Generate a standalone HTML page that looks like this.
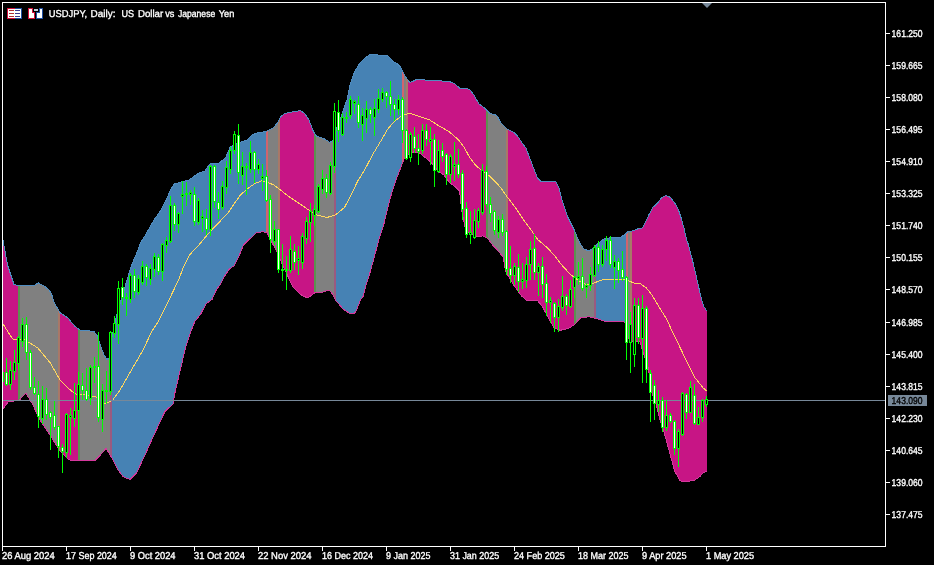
<!DOCTYPE html><html><head><meta charset="utf-8"><title>USDJPY, Daily</title>
<style>
html,body{margin:0;padding:0;background:#000;}
body{width:934px;height:565px;overflow:hidden;position:relative;font-family:"Liberation Sans",sans-serif;}
svg{position:absolute;left:0;top:0;display:block}
text{font-family:"Liberation Sans",sans-serif;font-size:10px;fill:#fff;text-rendering:geometricPrecision;stroke:#fff;stroke-width:0.35px;}
</style></head><body>
<svg width="934" height="565" viewBox="0 0 934 565">
<rect width="934" height="565" fill="#000"/>
<defs><clipPath id="band"><polygon points="3.0,240.0 7.5,265.0 14.0,284.5 19.0,285.6 34.0,285.5 36.5,284.0 38.5,283.0 41.0,284.5 45.0,286.6 48.5,289.5 51.4,293.5 54.0,302.0 56.4,306.4 60.0,312.7 67.7,317.7 75.0,326.5 80.0,330.0 90.0,331.0 94.0,331.5 97.0,335.5 100.6,346.0 104.0,355.0 106.8,359.4 109.0,358.0 112.0,337.0 116.5,316.0 120.0,303.6 123.0,294.5 126.5,281.6 130.0,270.0 133.7,260.0 138.0,250.0 140.0,243.9 147.0,232.4 154.3,219.5 161.5,209.4 166.5,199.4 170.8,189.3 174.4,183.9 183.0,181.5 188.8,180.0 195.7,175.3 200.0,172.4 204.3,171.7 210.0,163.8 218.7,163.4 225.9,157.3 230.0,147.3 238.0,143.0 247.4,140.0 251.7,135.0 257.4,133.0 266.0,131.5 273.0,128.0 277.5,123.0 280.4,117.0 284.7,113.6 293.3,111.7 300.5,110.7 304.8,113.6 309.0,120.0 313.4,131.5 316.0,135.8 324.0,138.7 330.0,142.4 333.0,140.0 336.0,130.0 340.0,120.0 344.0,108.0 347.3,99.0 349.7,86.4 352.6,76.8 355.5,70.0 359.9,63.3 364.7,58.5 370.0,54.2 377.2,54.2 378.2,55.1 387.3,55.1 393.1,61.4 397.4,63.8 401.3,68.1 404.7,75.8 410.0,82.6 416.7,79.5 420.0,79.2 427.6,80.5 442.0,81.0 450.0,81.8 455.0,84.0 460.6,88.9 466.1,88.2 470.3,90.3 474.5,95.9 478.7,103.6 485.0,108.4 489.8,113.3 496.8,115.4 501.0,123.0 506.5,128.6 513.5,132.1 517.7,136.3 523.2,144.6 526.1,148.4 530.3,159.5 534.5,170.6 537.3,177.6 540.8,181.1 555.4,181.1 558.9,187.4 562.4,201.3 567.9,217.3 574.0,229.5 575.7,233.6 580.0,243.6 584.3,249.4 589.4,250.8 593.0,248.0 598.7,243.0 604.4,238.6 611.6,237.6 618.8,238.0 624.5,235.0 627.4,232.0 634.8,230.3 638.7,228.4 642.5,227.9 645.4,222.6 649.3,213.9 653.1,207.2 657.9,202.8 661.8,197.5 666.1,195.4 670.5,197.5 674.3,202.3 678.2,209.1 681.1,217.8 684.0,228.4 686.4,239.0 687.8,242.7 692.5,260.3 697.3,281.0 701.3,298.5 703.7,306.4 707.0,311.2 707.0,471.5 703.0,472.7 700.4,476.0 695.0,480.0 685.0,482.0 680.0,480.7 677.4,476.0 674.6,471.0 670.3,455.0 664.5,433.7 659.5,418.0 656.0,404.0 651.6,392.0 648.5,369.0 644.0,355.0 640.0,342.0 632.0,341.0 627.0,338.0 625.0,323.0 623.4,321.7 606.2,321.7 597.6,318.9 589.0,316.7 580.3,318.0 574.6,324.6 568.9,328.2 560.3,330.3 554.5,328.2 548.8,318.9 543.0,307.4 537.3,300.2 527.3,301.0 521.5,295.9 514.3,285.9 505.7,271.5 503.0,256.7 497.4,250.0 491.6,243.8 487.3,238.0 483.0,235.9 475.9,236.6 465.8,231.0 461.5,209.0 459.6,191.0 455.0,186.7 449.5,182.4 443.8,175.0 438.0,171.0 430.9,162.3 425.0,157.3 419.4,153.0 413.6,152.0 404.8,157.0 402.0,164.4 396.0,180.0 390.4,197.4 384.0,223.6 379.0,239.4 374.8,255.0 370.5,271.0 366.0,285.0 363.3,296.0 360.5,300.0 355.4,312.8 350.4,314.0 343.0,309.0 335.4,300.0 333.0,294.6 329.0,290.0 321.7,292.5 314.5,293.0 307.8,298.0 303.0,296.0 298.8,293.0 293.0,286.7 288.7,278.0 283.0,266.0 277.3,252.0 271.5,242.0 267.0,232.4 262.0,231.7 256.2,233.0 249.0,239.6 243.3,245.3 239.0,256.0 234.0,265.8 229.0,269.4 224.8,275.8 220.5,284.4 216.2,290.0 212.0,299.5 206.0,303.8 200.4,314.6 194.7,321.7 191.0,331.0 185.5,348.0 180.0,371.0 175.0,392.6 173.0,404.0 165.0,411.4 155.0,432.7 145.0,455.0 136.6,472.8 130.0,479.6 123.0,476.5 118.0,470.0 112.0,458.0 106.0,448.4 100.4,455.0 94.7,461.0 80.0,460.3 71.7,461.0 68.9,459.6 60.0,451.0 50.0,435.0 38.7,418.0 33.0,405.0 25.8,393.0 19.0,400.5 8.6,401.5 3.0,409.0"/></clipPath></defs>
<g clip-path="url(#band)" shape-rendering="crispEdges">
<rect x="3" y="40" width="15" height="460" fill="#C71585"/>
<rect x="20" y="40" width="38" height="460" fill="#808080"/>
<rect x="60" y="40" width="18" height="460" fill="#C71585"/>
<rect x="80" y="40" width="30" height="460" fill="#808080"/>
<rect x="112" y="40" width="154" height="460" fill="#4682B4"/>
<rect x="268" y="40" width="10" height="460" fill="#808080"/>
<rect x="280" y="40" width="34" height="460" fill="#C71585"/>
<rect x="316" y="40" width="18" height="460" fill="#808080"/>
<rect x="336" y="40" width="66" height="460" fill="#4682B4"/>
<rect x="404" y="40" width="2" height="460" fill="#808080"/>
<rect x="408" y="40" width="78" height="460" fill="#C71585"/>
<rect x="488" y="40" width="18" height="460" fill="#808080"/>
<rect x="508" y="40" width="66" height="460" fill="#C71585"/>
<rect x="576" y="40" width="18" height="460" fill="#808080"/>
<rect x="596" y="40" width="30" height="460" fill="#4682B4"/>
<rect x="628" y="40" width="2" height="460" fill="#808080"/>
<rect x="632" y="40" width="75" height="460" fill="#C71585"/>
<rect x="18" y="40" width="2" height="460" fill="#5A9150"/>
<rect x="58" y="40" width="2" height="460" fill="#A87868"/>
<rect x="78" y="40" width="2" height="460" fill="#5A9150"/>
<rect x="110" y="40" width="2" height="460" fill="#9A5A80"/>
<rect x="266" y="40" width="2" height="460" fill="#D0646E"/>
<rect x="278" y="40" width="2" height="460" fill="#A87868"/>
<rect x="314" y="40" width="2" height="460" fill="#5A9150"/>
<rect x="334" y="40" width="2" height="460" fill="#9A5A80"/>
<rect x="402" y="40" width="2" height="460" fill="#D0646E"/>
<rect x="406" y="40" width="2" height="460" fill="#A87868"/>
<rect x="486" y="40" width="2" height="460" fill="#5A9150"/>
<rect x="506" y="40" width="2" height="460" fill="#A87868"/>
<rect x="574" y="40" width="2" height="460" fill="#5A9150"/>
<rect x="594" y="40" width="2" height="460" fill="#9A5A80"/>
<rect x="626" y="40" width="2" height="460" fill="#D0646E"/>
<rect x="630" y="40" width="2" height="460" fill="#A87868"/>
</g>
<polyline points="3.0,240.0 7.5,265.0 14.0,284.5 19.0,285.6 34.0,285.5 36.5,284.0 38.5,283.0 41.0,284.5 45.0,286.6 48.5,289.5 51.4,293.5 54.0,302.0 56.4,306.4 60.0,312.7 67.7,317.7 75.0,326.5 80.0,330.0 90.0,331.0 94.0,331.5 97.0,335.5 100.6,346.0 104.0,355.0 106.8,359.4 109.0,358.0 112.0,337.0 116.5,316.0 120.0,303.6 123.0,294.5 126.5,281.6 130.0,270.0 133.7,260.0 138.0,250.0 140.0,243.9 147.0,232.4 154.3,219.5 161.5,209.4 166.5,199.4 170.8,189.3 174.4,183.9 183.0,181.5 188.8,180.0 195.7,175.3 200.0,172.4 204.3,171.7 210.0,163.8 218.7,163.4 225.9,157.3 230.0,147.3 238.0,143.0 247.4,140.0 251.7,135.0 257.4,133.0 266.0,131.5 273.0,128.0 277.5,123.0 280.4,117.0 284.7,113.6 293.3,111.7 300.5,110.7 304.8,113.6 309.0,120.0 313.4,131.5 316.0,135.8 324.0,138.7 330.0,142.4 333.0,140.0 336.0,130.0 340.0,120.0 344.0,108.0 347.3,99.0 349.7,86.4 352.6,76.8 355.5,70.0 359.9,63.3 364.7,58.5 370.0,54.2 377.2,54.2 378.2,55.1 387.3,55.1 393.1,61.4 397.4,63.8 401.3,68.1 404.7,75.8 410.0,82.6 416.7,79.5 420.0,79.2 427.6,80.5 442.0,81.0 450.0,81.8 455.0,84.0 460.6,88.9 466.1,88.2 470.3,90.3 474.5,95.9 478.7,103.6 485.0,108.4 489.8,113.3 496.8,115.4 501.0,123.0 506.5,128.6 513.5,132.1 517.7,136.3 523.2,144.6 526.1,148.4 530.3,159.5 534.5,170.6 537.3,177.6 540.8,181.1 555.4,181.1 558.9,187.4 562.4,201.3 567.9,217.3 574.0,229.5 575.7,233.6 580.0,243.6 584.3,249.4 589.4,250.8 593.0,248.0 598.7,243.0 604.4,238.6 611.6,237.6 618.8,238.0 624.5,235.0 627.4,232.0 634.8,230.3 638.7,228.4 642.5,227.9 645.4,222.6 649.3,213.9 653.1,207.2 657.9,202.8 661.8,197.5 666.1,195.4 670.5,197.5 674.3,202.3 678.2,209.1 681.1,217.8 684.0,228.4 686.4,239.0 687.8,242.7 692.5,260.3 697.3,281.0 701.3,298.5 703.7,306.4 707.0,311.2" fill="none" stroke="#4F8CC0" stroke-width="1" shape-rendering="crispEdges"/>
<polyline points="3.0,409.0 8.6,401.5 19.0,400.5 25.8,393.0 33.0,405.0 38.7,418.0 50.0,435.0 60.0,451.0 68.9,459.6 71.7,461.0 80.0,460.3 94.7,461.0 100.4,455.0 106.0,448.4 112.0,458.0 118.0,470.0 123.0,476.5 130.0,479.6 136.6,472.8 145.0,455.0 155.0,432.7 165.0,411.4 173.0,404.0 175.0,392.6 180.0,371.0 185.5,348.0 191.0,331.0 194.7,321.7 200.4,314.6 206.0,303.8 212.0,299.5 216.2,290.0 220.5,284.4 224.8,275.8 229.0,269.4 234.0,265.8 239.0,256.0 243.3,245.3 249.0,239.6 256.2,233.0 262.0,231.7 267.0,232.4 271.5,242.0 277.3,252.0 283.0,266.0 288.7,278.0 293.0,286.7 298.8,293.0 303.0,296.0 307.8,298.0 314.5,293.0 321.7,292.5 329.0,290.0 333.0,294.6 335.4,300.0 343.0,309.0 350.4,314.0 355.4,312.8 360.5,300.0 363.3,296.0 366.0,285.0 370.5,271.0 374.8,255.0 379.0,239.4 384.0,223.6 390.4,197.4 396.0,180.0 402.0,164.4 404.8,157.0 413.6,152.0 419.4,153.0 425.0,157.3 430.9,162.3 438.0,171.0 443.8,175.0 449.5,182.4 455.0,186.7 459.6,191.0 461.5,209.0 465.8,231.0 475.9,236.6 483.0,235.9 487.3,238.0 491.6,243.8 497.4,250.0 503.0,256.7 505.7,271.5 514.3,285.9 521.5,295.9 527.3,301.0 537.3,300.2 543.0,307.4 548.8,318.9 554.5,328.2 560.3,330.3 568.9,328.2 574.6,324.6 580.3,318.0 589.0,316.7 597.6,318.9 606.2,321.7 623.4,321.7 625.0,323.0 627.0,338.0 632.0,341.0 640.0,342.0 644.0,355.0 648.5,369.0 651.6,392.0 656.0,404.0 659.5,418.0 664.5,433.7 670.3,455.0 674.6,471.0 677.4,476.0 680.0,480.7 685.0,482.0 695.0,480.0 700.4,476.0 703.0,472.7 707.0,471.5" fill="none" stroke="#D4389C" stroke-width="1" shape-rendering="crispEdges"/>
<polyline points="3.0,324.0 12.5,339.0 25.0,340.0 37.6,347.8 50.0,362.6 60.0,380.0 67.7,387.6 75.0,393.9 85.0,395.0 95.0,396.4 105.0,403.9 112.8,400.0 120.0,390.0 130.0,372.6 143.0,350.0 152.4,330.3 157.4,323.0 161.7,314.6 167.4,303.0 173.0,291.6 179.0,278.7 184.0,265.8 189.0,255.7 194.0,250.0 197.4,246.7 204.6,238.0 211.7,230.0 220.3,221.0 227.5,213.7 233.3,205.0 240.4,195.0 247.6,188.6 254.8,183.6 262.0,180.7 269.0,183.0 274.0,185.0 290.0,197.4 298.6,203.0 308.7,210.0 317.0,215.0 327.0,217.5 336.0,214.6 344.5,207.4 350.0,197.4 357.4,181.6 364.6,170.0 373.0,154.0 380.0,142.4 387.4,129.5 394.6,121.0 401.8,116.0 409.7,113.0 417.6,116.0 429.0,119.5 437.6,125.0 449.5,132.0 458.0,139.3 463.9,147.0 469.6,157.3 475.3,165.0 481.0,170.0 488.3,175.0 495.4,181.7 501.0,188.0 507.0,196.7 514.6,206.5 523.2,219.4 531.8,230.9 537.6,239.5 547.6,248.0 554.8,256.0 562.0,265.3 570.6,274.6 578.9,280.8 586.0,284.4 593.3,283.3 600.4,280.4 606.2,279.0 612.0,280.0 619.0,279.4 626.3,280.0 634.0,283.0 640.0,283.5 646.4,288.0 651.0,293.7 656.0,301.7 660.7,309.6 666.3,318.4 672.8,332.6 685.0,357.7 695.0,377.7 702.9,387.7 706.6,391.0" fill="none" stroke="#FFD75E" stroke-width="1" shape-rendering="crispEdges"/>
<rect x="3" y="400" width="882" height="1" fill="#778899" shape-rendering="crispEdges"/>
<g shape-rendering="crispEdges">
<rect x="6" y="358" width="1" height="28" fill="#00FF00"/>
<rect x="5" y="372" width="3" height="13" fill="#00FF00"/>
<rect x="6" y="373" width="1" height="11" fill="#fff"/>
<rect x="10" y="361" width="1" height="29" fill="#00FF00"/>
<rect x="9" y="370" width="3" height="15" fill="#00FF00"/>
<rect x="10" y="371" width="1" height="13" fill="#000"/>
<rect x="14" y="350" width="1" height="30" fill="#00FF00"/>
<rect x="13" y="362" width="3" height="10" fill="#00FF00"/>
<rect x="14" y="363" width="1" height="8" fill="#000"/>
<rect x="18" y="336" width="1" height="34" fill="#00FF00"/>
<rect x="17" y="337" width="3" height="27" fill="#00FF00"/>
<rect x="18" y="338" width="1" height="25" fill="#000"/>
<rect x="22" y="318" width="1" height="29" fill="#00FF00"/>
<rect x="21" y="324" width="3" height="18" fill="#00FF00"/>
<rect x="22" y="325" width="1" height="16" fill="#000"/>
<rect x="26" y="317" width="1" height="43" fill="#00FF00"/>
<rect x="25" y="324" width="3" height="29" fill="#00FF00"/>
<rect x="26" y="325" width="1" height="27" fill="#fff"/>
<rect x="30" y="350" width="1" height="40" fill="#00FF00"/>
<rect x="29" y="352" width="3" height="36" fill="#00FF00"/>
<rect x="30" y="353" width="1" height="34" fill="#fff"/>
<rect x="34" y="377" width="1" height="18" fill="#00FF00"/>
<rect x="33" y="387" width="3" height="7" fill="#00FF00"/>
<rect x="34" y="388" width="1" height="5" fill="#fff"/>
<rect x="38" y="381" width="1" height="47" fill="#00FF00"/>
<rect x="37" y="394" width="3" height="23" fill="#00FF00"/>
<rect x="38" y="395" width="1" height="21" fill="#fff"/>
<rect x="42" y="386" width="1" height="38" fill="#00FF00"/>
<rect x="41" y="399" width="3" height="20" fill="#00FF00"/>
<rect x="42" y="400" width="1" height="18" fill="#000"/>
<rect x="46" y="388" width="1" height="32" fill="#00FF00"/>
<rect x="45" y="399" width="3" height="16" fill="#00FF00"/>
<rect x="46" y="400" width="1" height="14" fill="#fff"/>
<rect x="50" y="411" width="1" height="39" fill="#00FF00"/>
<rect x="49" y="412" width="3" height="6" fill="#00FF00"/>
<rect x="50" y="413" width="1" height="4" fill="#fff"/>
<rect x="54" y="401" width="1" height="29" fill="#00FF00"/>
<rect x="53" y="415" width="3" height="13" fill="#00FF00"/>
<rect x="54" y="416" width="1" height="11" fill="#fff"/>
<rect x="58" y="426" width="1" height="32" fill="#00FF00"/>
<rect x="57" y="426" width="3" height="21" fill="#00FF00"/>
<rect x="58" y="427" width="1" height="19" fill="#fff"/>
<rect x="62" y="444" width="1" height="29" fill="#00FF00"/>
<rect x="61" y="447" width="3" height="5" fill="#00FF00"/>
<rect x="62" y="448" width="1" height="3" fill="#fff"/>
<rect x="66" y="413" width="1" height="45" fill="#00FF00"/>
<rect x="65" y="414" width="3" height="39" fill="#00FF00"/>
<rect x="66" y="415" width="1" height="37" fill="#000"/>
<rect x="70" y="408" width="1" height="47" fill="#00FF00"/>
<rect x="69" y="415" width="3" height="3" fill="#00FF00"/>
<rect x="70" y="416" width="1" height="1" fill="#000"/>
<rect x="74" y="383" width="1" height="44" fill="#00FF00"/>
<rect x="73" y="410" width="3" height="9" fill="#00FF00"/>
<rect x="74" y="411" width="1" height="7" fill="#000"/>
<rect x="78" y="372" width="1" height="58" fill="#00FF00"/>
<rect x="77" y="384" width="3" height="27" fill="#00FF00"/>
<rect x="78" y="385" width="1" height="25" fill="#000"/>
<rect x="82" y="373" width="1" height="27" fill="#00FF00"/>
<rect x="81" y="385" width="3" height="6" fill="#00FF00"/>
<rect x="82" y="386" width="1" height="4" fill="#fff"/>
<rect x="86" y="368" width="1" height="33" fill="#00FF00"/>
<rect x="85" y="390" width="3" height="10" fill="#00FF00"/>
<rect x="86" y="391" width="1" height="8" fill="#fff"/>
<rect x="90" y="365" width="1" height="40" fill="#00FF00"/>
<rect x="89" y="367" width="3" height="32" fill="#00FF00"/>
<rect x="90" y="368" width="1" height="30" fill="#000"/>
<rect x="94" y="357" width="1" height="26" fill="#00FF00"/>
<rect x="93" y="366" width="3" height="2" fill="#00FF00"/>
<rect x="98" y="332" width="1" height="90" fill="#00FF00"/>
<rect x="97" y="366" width="3" height="52" fill="#00FF00"/>
<rect x="98" y="367" width="1" height="50" fill="#fff"/>
<rect x="102" y="384" width="1" height="48" fill="#00FF00"/>
<rect x="101" y="390" width="3" height="30" fill="#00FF00"/>
<rect x="102" y="391" width="1" height="28" fill="#000"/>
<rect x="106" y="371" width="1" height="33" fill="#00FF00"/>
<rect x="105" y="390" width="3" height="2" fill="#00FF00"/>
<rect x="110" y="331" width="1" height="64" fill="#00FF00"/>
<rect x="109" y="332" width="3" height="60" fill="#00FF00"/>
<rect x="110" y="333" width="1" height="58" fill="#000"/>
<rect x="114" y="316" width="1" height="22" fill="#00FF00"/>
<rect x="113" y="323" width="3" height="11" fill="#00FF00"/>
<rect x="114" y="324" width="1" height="9" fill="#000"/>
<rect x="118" y="281" width="1" height="63" fill="#00FF00"/>
<rect x="117" y="288" width="3" height="37" fill="#00FF00"/>
<rect x="118" y="289" width="1" height="35" fill="#000"/>
<rect x="122" y="278" width="1" height="27" fill="#00FF00"/>
<rect x="121" y="287" width="3" height="11" fill="#00FF00"/>
<rect x="122" y="288" width="1" height="9" fill="#fff"/>
<rect x="126" y="293" width="1" height="23" fill="#00FF00"/>
<rect x="125" y="297" width="3" height="2" fill="#00FF00"/>
<rect x="130" y="273" width="1" height="30" fill="#00FF00"/>
<rect x="129" y="275" width="3" height="25" fill="#00FF00"/>
<rect x="130" y="276" width="1" height="23" fill="#000"/>
<rect x="134" y="269" width="1" height="29" fill="#00FF00"/>
<rect x="133" y="275" width="3" height="17" fill="#00FF00"/>
<rect x="134" y="276" width="1" height="15" fill="#fff"/>
<rect x="138" y="275" width="1" height="20" fill="#00FF00"/>
<rect x="137" y="278" width="3" height="15" fill="#00FF00"/>
<rect x="138" y="279" width="1" height="13" fill="#000"/>
<rect x="142" y="261" width="1" height="24" fill="#00FF00"/>
<rect x="141" y="266" width="3" height="17" fill="#00FF00"/>
<rect x="142" y="267" width="1" height="15" fill="#000"/>
<rect x="146" y="264" width="1" height="22" fill="#00FF00"/>
<rect x="145" y="266" width="3" height="12" fill="#00FF00"/>
<rect x="146" y="267" width="1" height="10" fill="#fff"/>
<rect x="150" y="264" width="1" height="21" fill="#00FF00"/>
<rect x="149" y="268" width="3" height="12" fill="#00FF00"/>
<rect x="150" y="269" width="1" height="10" fill="#000"/>
<rect x="154" y="253" width="1" height="24" fill="#00FF00"/>
<rect x="153" y="256" width="3" height="14" fill="#00FF00"/>
<rect x="154" y="257" width="1" height="12" fill="#000"/>
<rect x="158" y="254" width="1" height="21" fill="#00FF00"/>
<rect x="157" y="257" width="3" height="15" fill="#00FF00"/>
<rect x="158" y="258" width="1" height="13" fill="#fff"/>
<rect x="162" y="243" width="1" height="38" fill="#00FF00"/>
<rect x="161" y="244" width="3" height="28" fill="#00FF00"/>
<rect x="162" y="245" width="1" height="26" fill="#000"/>
<rect x="166" y="237" width="1" height="16" fill="#00FF00"/>
<rect x="165" y="240" width="3" height="6" fill="#00FF00"/>
<rect x="166" y="241" width="1" height="4" fill="#000"/>
<rect x="170" y="196" width="1" height="47" fill="#00FF00"/>
<rect x="169" y="205" width="3" height="37" fill="#00FF00"/>
<rect x="170" y="206" width="1" height="35" fill="#000"/>
<rect x="174" y="203" width="1" height="28" fill="#00FF00"/>
<rect x="173" y="205" width="3" height="20" fill="#00FF00"/>
<rect x="174" y="206" width="1" height="18" fill="#fff"/>
<rect x="178" y="212" width="1" height="21" fill="#00FF00"/>
<rect x="177" y="213" width="3" height="12" fill="#00FF00"/>
<rect x="178" y="214" width="1" height="10" fill="#000"/>
<rect x="182" y="181" width="1" height="33" fill="#00FF00"/>
<rect x="181" y="194" width="3" height="3" fill="#00FF00"/>
<rect x="182" y="195" width="1" height="1" fill="#000"/>
<rect x="186" y="182" width="1" height="24" fill="#00FF00"/>
<rect x="185" y="193" width="3" height="2" fill="#00FF00"/>
<rect x="190" y="190" width="1" height="15" fill="#00FF00"/>
<rect x="189" y="192" width="3" height="3" fill="#00FF00"/>
<rect x="190" y="193" width="1" height="1" fill="#000"/>
<rect x="194" y="187" width="1" height="39" fill="#00FF00"/>
<rect x="193" y="194" width="3" height="28" fill="#00FF00"/>
<rect x="194" y="195" width="1" height="26" fill="#fff"/>
<rect x="198" y="198" width="1" height="27" fill="#00FF00"/>
<rect x="197" y="200" width="3" height="23" fill="#00FF00"/>
<rect x="198" y="201" width="1" height="21" fill="#000"/>
<rect x="202" y="210" width="1" height="22" fill="#00FF00"/>
<rect x="201" y="216" width="3" height="3" fill="#00FF00"/>
<rect x="202" y="217" width="1" height="1" fill="#000"/>
<rect x="206" y="209" width="1" height="26" fill="#00FF00"/>
<rect x="205" y="218" width="3" height="12" fill="#00FF00"/>
<rect x="206" y="219" width="1" height="10" fill="#fff"/>
<rect x="210" y="165" width="1" height="71" fill="#00FF00"/>
<rect x="209" y="166" width="3" height="64" fill="#00FF00"/>
<rect x="210" y="167" width="1" height="62" fill="#000"/>
<rect x="214" y="165" width="1" height="43" fill="#00FF00"/>
<rect x="213" y="166" width="3" height="36" fill="#00FF00"/>
<rect x="214" y="167" width="1" height="34" fill="#fff"/>
<rect x="218" y="192" width="1" height="27" fill="#00FF00"/>
<rect x="217" y="202" width="3" height="8" fill="#00FF00"/>
<rect x="218" y="203" width="1" height="6" fill="#fff"/>
<rect x="222" y="181" width="1" height="29" fill="#00FF00"/>
<rect x="221" y="186" width="3" height="22" fill="#00FF00"/>
<rect x="222" y="187" width="1" height="20" fill="#000"/>
<rect x="226" y="161" width="1" height="33" fill="#00FF00"/>
<rect x="225" y="167" width="3" height="21" fill="#00FF00"/>
<rect x="226" y="168" width="1" height="19" fill="#000"/>
<rect x="230" y="147" width="1" height="27" fill="#00FF00"/>
<rect x="229" y="150" width="3" height="20" fill="#00FF00"/>
<rect x="230" y="151" width="1" height="18" fill="#000"/>
<rect x="234" y="131" width="1" height="23" fill="#00FF00"/>
<rect x="233" y="134" width="3" height="17" fill="#00FF00"/>
<rect x="234" y="135" width="1" height="15" fill="#000"/>
<rect x="238" y="124" width="1" height="60" fill="#00FF00"/>
<rect x="237" y="135" width="3" height="38" fill="#00FF00"/>
<rect x="238" y="136" width="1" height="36" fill="#fff"/>
<rect x="242" y="152" width="1" height="33" fill="#00FF00"/>
<rect x="241" y="166" width="3" height="10" fill="#00FF00"/>
<rect x="242" y="167" width="1" height="8" fill="#000"/>
<rect x="246" y="163" width="1" height="32" fill="#00FF00"/>
<rect x="245" y="166" width="3" height="2" fill="#00FF00"/>
<rect x="250" y="141" width="1" height="32" fill="#00FF00"/>
<rect x="249" y="152" width="3" height="18" fill="#00FF00"/>
<rect x="250" y="153" width="1" height="16" fill="#000"/>
<rect x="254" y="151" width="1" height="32" fill="#00FF00"/>
<rect x="253" y="152" width="3" height="18" fill="#00FF00"/>
<rect x="254" y="153" width="1" height="16" fill="#fff"/>
<rect x="258" y="159" width="1" height="15" fill="#00FF00"/>
<rect x="257" y="164" width="3" height="6" fill="#00FF00"/>
<rect x="258" y="165" width="1" height="4" fill="#000"/>
<rect x="262" y="164" width="1" height="27" fill="#00FF00"/>
<rect x="261" y="176" width="3" height="3" fill="#00FF00"/>
<rect x="262" y="177" width="1" height="1" fill="#000"/>
<rect x="266" y="170" width="1" height="32" fill="#00FF00"/>
<rect x="265" y="176" width="3" height="25" fill="#00FF00"/>
<rect x="266" y="177" width="1" height="23" fill="#fff"/>
<rect x="270" y="195" width="1" height="58" fill="#00FF00"/>
<rect x="269" y="199" width="3" height="41" fill="#00FF00"/>
<rect x="270" y="200" width="1" height="39" fill="#fff"/>
<rect x="274" y="221" width="1" height="24" fill="#00FF00"/>
<rect x="273" y="229" width="3" height="13" fill="#00FF00"/>
<rect x="274" y="230" width="1" height="11" fill="#000"/>
<rect x="278" y="229" width="1" height="44" fill="#00FF00"/>
<rect x="277" y="229" width="3" height="41" fill="#00FF00"/>
<rect x="278" y="230" width="1" height="39" fill="#fff"/>
<rect x="282" y="244" width="1" height="37" fill="#00FF00"/>
<rect x="281" y="269" width="3" height="2" fill="#00FF00"/>
<rect x="286" y="256" width="1" height="34" fill="#00FF00"/>
<rect x="285" y="269" width="3" height="2" fill="#00FF00"/>
<rect x="290" y="236" width="1" height="37" fill="#00FF00"/>
<rect x="289" y="249" width="3" height="22" fill="#00FF00"/>
<rect x="290" y="250" width="1" height="20" fill="#000"/>
<rect x="294" y="244" width="1" height="26" fill="#00FF00"/>
<rect x="293" y="251" width="3" height="12" fill="#00FF00"/>
<rect x="294" y="252" width="1" height="10" fill="#fff"/>
<rect x="298" y="246" width="1" height="29" fill="#00FF00"/>
<rect x="297" y="258" width="3" height="3" fill="#00FF00"/>
<rect x="298" y="259" width="1" height="1" fill="#000"/>
<rect x="302" y="233" width="1" height="36" fill="#00FF00"/>
<rect x="301" y="236" width="3" height="27" fill="#00FF00"/>
<rect x="302" y="237" width="1" height="25" fill="#000"/>
<rect x="306" y="217" width="1" height="27" fill="#00FF00"/>
<rect x="305" y="221" width="3" height="18" fill="#00FF00"/>
<rect x="306" y="222" width="1" height="16" fill="#000"/>
<rect x="310" y="203" width="1" height="39" fill="#00FF00"/>
<rect x="309" y="211" width="3" height="12" fill="#00FF00"/>
<rect x="310" y="212" width="1" height="10" fill="#000"/>
<rect x="314" y="205" width="1" height="21" fill="#00FF00"/>
<rect x="313" y="209" width="3" height="7" fill="#00FF00"/>
<rect x="314" y="210" width="1" height="5" fill="#000"/>
<rect x="318" y="184" width="1" height="29" fill="#00FF00"/>
<rect x="317" y="186" width="3" height="26" fill="#00FF00"/>
<rect x="318" y="187" width="1" height="24" fill="#000"/>
<rect x="322" y="170" width="1" height="24" fill="#00FF00"/>
<rect x="321" y="178" width="3" height="12" fill="#00FF00"/>
<rect x="322" y="179" width="1" height="10" fill="#000"/>
<rect x="326" y="174" width="1" height="24" fill="#00FF00"/>
<rect x="325" y="178" width="3" height="15" fill="#00FF00"/>
<rect x="326" y="179" width="1" height="13" fill="#fff"/>
<rect x="330" y="162" width="1" height="33" fill="#00FF00"/>
<rect x="329" y="165" width="3" height="29" fill="#00FF00"/>
<rect x="330" y="166" width="1" height="27" fill="#000"/>
<rect x="334" y="103" width="1" height="70" fill="#00FF00"/>
<rect x="333" y="111" width="3" height="56" fill="#00FF00"/>
<rect x="334" y="112" width="1" height="54" fill="#000"/>
<rect x="338" y="100" width="1" height="42" fill="#00FF00"/>
<rect x="337" y="112" width="3" height="19" fill="#00FF00"/>
<rect x="338" y="113" width="1" height="17" fill="#fff"/>
<rect x="342" y="113" width="1" height="23" fill="#00FF00"/>
<rect x="341" y="117" width="3" height="18" fill="#00FF00"/>
<rect x="342" y="118" width="1" height="16" fill="#000"/>
<rect x="346" y="112" width="1" height="11" fill="#00FF00"/>
<rect x="345" y="117" width="3" height="2" fill="#00FF00"/>
<rect x="350" y="96" width="1" height="23" fill="#00FF00"/>
<rect x="349" y="99" width="3" height="17" fill="#00FF00"/>
<rect x="350" y="100" width="1" height="15" fill="#000"/>
<rect x="354" y="100" width="1" height="14" fill="#00FF00"/>
<rect x="353" y="101" width="3" height="3" fill="#00FF00"/>
<rect x="354" y="102" width="1" height="1" fill="#000"/>
<rect x="358" y="96" width="1" height="32" fill="#00FF00"/>
<rect x="357" y="104" width="3" height="19" fill="#00FF00"/>
<rect x="358" y="105" width="1" height="17" fill="#fff"/>
<rect x="362" y="108" width="1" height="33" fill="#00FF00"/>
<rect x="361" y="115" width="3" height="10" fill="#00FF00"/>
<rect x="362" y="116" width="1" height="8" fill="#000"/>
<rect x="366" y="101" width="1" height="32" fill="#00FF00"/>
<rect x="365" y="109" width="3" height="10" fill="#00FF00"/>
<rect x="366" y="110" width="1" height="8" fill="#000"/>
<rect x="370" y="107" width="1" height="16" fill="#00FF00"/>
<rect x="369" y="109" width="3" height="6" fill="#00FF00"/>
<rect x="370" y="110" width="1" height="4" fill="#fff"/>
<rect x="374" y="99" width="1" height="37" fill="#00FF00"/>
<rect x="373" y="108" width="3" height="10" fill="#00FF00"/>
<rect x="374" y="109" width="1" height="8" fill="#000"/>
<rect x="378" y="89" width="1" height="24" fill="#00FF00"/>
<rect x="377" y="98" width="3" height="12" fill="#00FF00"/>
<rect x="378" y="99" width="1" height="10" fill="#000"/>
<rect x="382" y="88" width="1" height="14" fill="#00FF00"/>
<rect x="381" y="92" width="3" height="8" fill="#00FF00"/>
<rect x="382" y="93" width="1" height="6" fill="#000"/>
<rect x="386" y="91" width="1" height="17" fill="#00FF00"/>
<rect x="385" y="92" width="3" height="5" fill="#00FF00"/>
<rect x="386" y="93" width="1" height="3" fill="#fff"/>
<rect x="390" y="81" width="1" height="35" fill="#00FF00"/>
<rect x="389" y="96" width="3" height="9" fill="#00FF00"/>
<rect x="390" y="97" width="1" height="7" fill="#fff"/>
<rect x="394" y="99" width="1" height="22" fill="#00FF00"/>
<rect x="393" y="104" width="3" height="6" fill="#00FF00"/>
<rect x="394" y="105" width="1" height="4" fill="#fff"/>
<rect x="398" y="95" width="1" height="20" fill="#00FF00"/>
<rect x="397" y="99" width="3" height="11" fill="#00FF00"/>
<rect x="398" y="100" width="1" height="9" fill="#000"/>
<rect x="402" y="97" width="1" height="46" fill="#00FF00"/>
<rect x="401" y="99" width="3" height="32" fill="#00FF00"/>
<rect x="402" y="100" width="1" height="30" fill="#fff"/>
<rect x="406" y="129" width="1" height="31" fill="#00FF00"/>
<rect x="405" y="130" width="3" height="29" fill="#00FF00"/>
<rect x="406" y="131" width="1" height="27" fill="#fff"/>
<rect x="410" y="132" width="1" height="30" fill="#00FF00"/>
<rect x="409" y="134" width="3" height="24" fill="#00FF00"/>
<rect x="410" y="135" width="1" height="22" fill="#000"/>
<rect x="414" y="127" width="1" height="26" fill="#00FF00"/>
<rect x="413" y="136" width="3" height="13" fill="#00FF00"/>
<rect x="414" y="137" width="1" height="11" fill="#fff"/>
<rect x="418" y="134" width="1" height="31" fill="#00FF00"/>
<rect x="417" y="148" width="3" height="4" fill="#00FF00"/>
<rect x="418" y="149" width="1" height="2" fill="#fff"/>
<rect x="422" y="124" width="1" height="30" fill="#00FF00"/>
<rect x="421" y="130" width="3" height="21" fill="#00FF00"/>
<rect x="422" y="131" width="1" height="19" fill="#000"/>
<rect x="426" y="124" width="1" height="22" fill="#00FF00"/>
<rect x="425" y="130" width="3" height="10" fill="#00FF00"/>
<rect x="426" y="131" width="1" height="8" fill="#fff"/>
<rect x="430" y="127" width="1" height="38" fill="#00FF00"/>
<rect x="429" y="139" width="3" height="3" fill="#00FF00"/>
<rect x="430" y="140" width="1" height="1" fill="#000"/>
<rect x="434" y="134" width="1" height="53" fill="#00FF00"/>
<rect x="433" y="139" width="3" height="32" fill="#00FF00"/>
<rect x="434" y="140" width="1" height="30" fill="#fff"/>
<rect x="438" y="140" width="1" height="33" fill="#00FF00"/>
<rect x="437" y="150" width="3" height="22" fill="#00FF00"/>
<rect x="438" y="151" width="1" height="20" fill="#000"/>
<rect x="442" y="143" width="1" height="19" fill="#00FF00"/>
<rect x="441" y="150" width="3" height="7" fill="#00FF00"/>
<rect x="442" y="151" width="1" height="5" fill="#fff"/>
<rect x="446" y="153" width="1" height="32" fill="#00FF00"/>
<rect x="445" y="154" width="3" height="21" fill="#00FF00"/>
<rect x="446" y="155" width="1" height="19" fill="#fff"/>
<rect x="450" y="154" width="1" height="29" fill="#00FF00"/>
<rect x="449" y="156" width="3" height="19" fill="#00FF00"/>
<rect x="450" y="157" width="1" height="17" fill="#000"/>
<rect x="454" y="142" width="1" height="39" fill="#00FF00"/>
<rect x="453" y="164" width="3" height="3" fill="#00FF00"/>
<rect x="454" y="165" width="1" height="1" fill="#000"/>
<rect x="458" y="149" width="1" height="29" fill="#00FF00"/>
<rect x="457" y="164" width="3" height="11" fill="#00FF00"/>
<rect x="458" y="165" width="1" height="9" fill="#fff"/>
<rect x="462" y="170" width="1" height="50" fill="#00FF00"/>
<rect x="461" y="173" width="3" height="37" fill="#00FF00"/>
<rect x="462" y="174" width="1" height="35" fill="#fff"/>
<rect x="466" y="202" width="1" height="36" fill="#00FF00"/>
<rect x="465" y="208" width="3" height="27" fill="#00FF00"/>
<rect x="466" y="209" width="1" height="25" fill="#fff"/>
<rect x="470" y="211" width="1" height="33" fill="#00FF00"/>
<rect x="469" y="232" width="3" height="3" fill="#00FF00"/>
<rect x="470" y="233" width="1" height="1" fill="#000"/>
<rect x="474" y="209" width="1" height="30" fill="#00FF00"/>
<rect x="473" y="220" width="3" height="18" fill="#00FF00"/>
<rect x="474" y="221" width="1" height="16" fill="#000"/>
<rect x="478" y="208" width="1" height="20" fill="#00FF00"/>
<rect x="477" y="210" width="3" height="12" fill="#00FF00"/>
<rect x="478" y="211" width="1" height="10" fill="#000"/>
<rect x="482" y="164" width="1" height="51" fill="#00FF00"/>
<rect x="481" y="170" width="3" height="43" fill="#00FF00"/>
<rect x="482" y="171" width="1" height="41" fill="#000"/>
<rect x="486" y="166" width="1" height="41" fill="#00FF00"/>
<rect x="485" y="171" width="3" height="34" fill="#00FF00"/>
<rect x="486" y="172" width="1" height="32" fill="#fff"/>
<rect x="490" y="197" width="1" height="25" fill="#00FF00"/>
<rect x="489" y="204" width="3" height="10" fill="#00FF00"/>
<rect x="490" y="205" width="1" height="8" fill="#fff"/>
<rect x="494" y="210" width="1" height="25" fill="#00FF00"/>
<rect x="493" y="211" width="3" height="20" fill="#00FF00"/>
<rect x="494" y="212" width="1" height="18" fill="#fff"/>
<rect x="498" y="216" width="1" height="22" fill="#00FF00"/>
<rect x="497" y="219" width="3" height="14" fill="#00FF00"/>
<rect x="498" y="220" width="1" height="12" fill="#000"/>
<rect x="502" y="214" width="1" height="22" fill="#00FF00"/>
<rect x="501" y="219" width="3" height="14" fill="#00FF00"/>
<rect x="502" y="220" width="1" height="12" fill="#fff"/>
<rect x="506" y="230" width="1" height="45" fill="#00FF00"/>
<rect x="505" y="231" width="3" height="39" fill="#00FF00"/>
<rect x="506" y="232" width="1" height="37" fill="#fff"/>
<rect x="510" y="246" width="1" height="37" fill="#00FF00"/>
<rect x="509" y="268" width="3" height="8" fill="#00FF00"/>
<rect x="510" y="269" width="1" height="6" fill="#fff"/>
<rect x="514" y="263" width="1" height="22" fill="#00FF00"/>
<rect x="513" y="266" width="3" height="10" fill="#00FF00"/>
<rect x="514" y="267" width="1" height="8" fill="#000"/>
<rect x="518" y="254" width="1" height="38" fill="#00FF00"/>
<rect x="517" y="267" width="3" height="15" fill="#00FF00"/>
<rect x="518" y="268" width="1" height="13" fill="#fff"/>
<rect x="522" y="263" width="1" height="26" fill="#00FF00"/>
<rect x="521" y="279" width="3" height="3" fill="#00FF00"/>
<rect x="522" y="280" width="1" height="1" fill="#000"/>
<rect x="526" y="257" width="1" height="31" fill="#00FF00"/>
<rect x="525" y="264" width="3" height="17" fill="#00FF00"/>
<rect x="526" y="265" width="1" height="15" fill="#000"/>
<rect x="530" y="241" width="1" height="39" fill="#00FF00"/>
<rect x="529" y="249" width="3" height="16" fill="#00FF00"/>
<rect x="530" y="250" width="1" height="14" fill="#000"/>
<rect x="534" y="234" width="1" height="46" fill="#00FF00"/>
<rect x="533" y="248" width="3" height="25" fill="#00FF00"/>
<rect x="534" y="249" width="1" height="23" fill="#fff"/>
<rect x="538" y="263" width="1" height="33" fill="#00FF00"/>
<rect x="537" y="266" width="3" height="7" fill="#00FF00"/>
<rect x="538" y="267" width="1" height="5" fill="#000"/>
<rect x="542" y="257" width="1" height="41" fill="#00FF00"/>
<rect x="541" y="266" width="3" height="19" fill="#00FF00"/>
<rect x="542" y="267" width="1" height="17" fill="#fff"/>
<rect x="546" y="274" width="1" height="42" fill="#00FF00"/>
<rect x="545" y="283" width="3" height="20" fill="#00FF00"/>
<rect x="546" y="284" width="1" height="18" fill="#fff"/>
<rect x="550" y="297" width="1" height="26" fill="#00FF00"/>
<rect x="549" y="300" width="3" height="3" fill="#00FF00"/>
<rect x="550" y="301" width="1" height="1" fill="#000"/>
<rect x="554" y="302" width="1" height="30" fill="#00FF00"/>
<rect x="553" y="303" width="3" height="15" fill="#00FF00"/>
<rect x="554" y="304" width="1" height="13" fill="#fff"/>
<rect x="558" y="299" width="1" height="33" fill="#00FF00"/>
<rect x="557" y="306" width="3" height="12" fill="#00FF00"/>
<rect x="558" y="307" width="1" height="10" fill="#000"/>
<rect x="562" y="276" width="1" height="35" fill="#00FF00"/>
<rect x="561" y="296" width="3" height="12" fill="#00FF00"/>
<rect x="562" y="297" width="1" height="10" fill="#000"/>
<rect x="566" y="294" width="1" height="21" fill="#00FF00"/>
<rect x="565" y="296" width="3" height="10" fill="#00FF00"/>
<rect x="566" y="297" width="1" height="8" fill="#fff"/>
<rect x="570" y="280" width="1" height="28" fill="#00FF00"/>
<rect x="569" y="289" width="3" height="18" fill="#00FF00"/>
<rect x="570" y="290" width="1" height="16" fill="#000"/>
<rect x="574" y="276" width="1" height="22" fill="#00FF00"/>
<rect x="573" y="277" width="3" height="11" fill="#00FF00"/>
<rect x="574" y="278" width="1" height="9" fill="#000"/>
<rect x="578" y="262" width="1" height="23" fill="#00FF00"/>
<rect x="577" y="276" width="3" height="3" fill="#00FF00"/>
<rect x="578" y="277" width="1" height="1" fill="#000"/>
<rect x="582" y="258" width="1" height="33" fill="#00FF00"/>
<rect x="581" y="276" width="3" height="13" fill="#00FF00"/>
<rect x="582" y="277" width="1" height="11" fill="#fff"/>
<rect x="586" y="283" width="1" height="15" fill="#00FF00"/>
<rect x="585" y="285" width="3" height="3" fill="#00FF00"/>
<rect x="586" y="286" width="1" height="1" fill="#000"/>
<rect x="590" y="267" width="1" height="24" fill="#00FF00"/>
<rect x="589" y="274" width="3" height="12" fill="#00FF00"/>
<rect x="590" y="275" width="1" height="10" fill="#000"/>
<rect x="594" y="245" width="1" height="32" fill="#00FF00"/>
<rect x="593" y="247" width="3" height="29" fill="#00FF00"/>
<rect x="594" y="248" width="1" height="27" fill="#000"/>
<rect x="598" y="241" width="1" height="31" fill="#00FF00"/>
<rect x="597" y="247" width="3" height="18" fill="#00FF00"/>
<rect x="598" y="248" width="1" height="16" fill="#fff"/>
<rect x="602" y="245" width="1" height="22" fill="#00FF00"/>
<rect x="601" y="249" width="3" height="16" fill="#00FF00"/>
<rect x="602" y="250" width="1" height="14" fill="#000"/>
<rect x="606" y="236" width="1" height="25" fill="#00FF00"/>
<rect x="605" y="240" width="3" height="10" fill="#00FF00"/>
<rect x="606" y="241" width="1" height="8" fill="#000"/>
<rect x="610" y="236" width="1" height="32" fill="#00FF00"/>
<rect x="609" y="240" width="3" height="25" fill="#00FF00"/>
<rect x="610" y="241" width="1" height="23" fill="#fff"/>
<rect x="614" y="255" width="1" height="34" fill="#00FF00"/>
<rect x="613" y="261" width="3" height="7" fill="#00FF00"/>
<rect x="614" y="262" width="1" height="5" fill="#000"/>
<rect x="618" y="258" width="1" height="25" fill="#00FF00"/>
<rect x="617" y="261" width="3" height="10" fill="#00FF00"/>
<rect x="618" y="262" width="1" height="8" fill="#fff"/>
<rect x="622" y="251" width="1" height="30" fill="#00FF00"/>
<rect x="621" y="269" width="3" height="9" fill="#00FF00"/>
<rect x="622" y="270" width="1" height="7" fill="#fff"/>
<rect x="626" y="276" width="1" height="84" fill="#00FF00"/>
<rect x="625" y="277" width="3" height="66" fill="#00FF00"/>
<rect x="626" y="278" width="1" height="64" fill="#fff"/>
<rect x="630" y="312" width="1" height="61" fill="#00FF00"/>
<rect x="629" y="324" width="3" height="19" fill="#00FF00"/>
<rect x="630" y="325" width="1" height="17" fill="#000"/>
<rect x="634" y="298" width="1" height="69" fill="#00FF00"/>
<rect x="633" y="305" width="3" height="50" fill="#00FF00"/>
<rect x="634" y="306" width="1" height="48" fill="#000"/>
<rect x="638" y="298" width="1" height="46" fill="#00FF00"/>
<rect x="637" y="305" width="3" height="33" fill="#00FF00"/>
<rect x="638" y="306" width="1" height="31" fill="#fff"/>
<rect x="642" y="295" width="1" height="88" fill="#00FF00"/>
<rect x="641" y="308" width="3" height="31" fill="#00FF00"/>
<rect x="642" y="309" width="1" height="29" fill="#000"/>
<rect x="646" y="306" width="1" height="77" fill="#00FF00"/>
<rect x="645" y="308" width="3" height="62" fill="#00FF00"/>
<rect x="646" y="309" width="1" height="60" fill="#fff"/>
<rect x="650" y="370" width="1" height="52" fill="#00FF00"/>
<rect x="649" y="373" width="3" height="20" fill="#00FF00"/>
<rect x="650" y="374" width="1" height="18" fill="#fff"/>
<rect x="654" y="380" width="1" height="40" fill="#00FF00"/>
<rect x="653" y="385" width="3" height="19" fill="#00FF00"/>
<rect x="654" y="386" width="1" height="17" fill="#fff"/>
<rect x="658" y="390" width="1" height="22" fill="#00FF00"/>
<rect x="657" y="400" width="3" height="5" fill="#00FF00"/>
<rect x="658" y="401" width="1" height="3" fill="#000"/>
<rect x="662" y="397" width="1" height="35" fill="#00FF00"/>
<rect x="661" y="400" width="3" height="28" fill="#00FF00"/>
<rect x="662" y="401" width="1" height="26" fill="#fff"/>
<rect x="666" y="400" width="1" height="31" fill="#00FF00"/>
<rect x="665" y="415" width="3" height="13" fill="#00FF00"/>
<rect x="666" y="416" width="1" height="11" fill="#000"/>
<rect x="670" y="413" width="1" height="10" fill="#00FF00"/>
<rect x="669" y="415" width="3" height="7" fill="#00FF00"/>
<rect x="670" y="416" width="1" height="5" fill="#fff"/>
<rect x="674" y="420" width="1" height="35" fill="#00FF00"/>
<rect x="673" y="421" width="3" height="28" fill="#00FF00"/>
<rect x="674" y="422" width="1" height="26" fill="#fff"/>
<rect x="678" y="429" width="1" height="38" fill="#00FF00"/>
<rect x="677" y="431" width="3" height="18" fill="#00FF00"/>
<rect x="678" y="432" width="1" height="16" fill="#000"/>
<rect x="682" y="392" width="1" height="44" fill="#00FF00"/>
<rect x="681" y="393" width="3" height="42" fill="#00FF00"/>
<rect x="682" y="394" width="1" height="40" fill="#000"/>
<rect x="686" y="393" width="1" height="26" fill="#00FF00"/>
<rect x="685" y="394" width="3" height="19" fill="#00FF00"/>
<rect x="686" y="395" width="1" height="17" fill="#fff"/>
<rect x="690" y="381" width="1" height="32" fill="#00FF00"/>
<rect x="689" y="387" width="3" height="26" fill="#00FF00"/>
<rect x="690" y="388" width="1" height="24" fill="#000"/>
<rect x="694" y="384" width="1" height="41" fill="#00FF00"/>
<rect x="693" y="395" width="3" height="29" fill="#00FF00"/>
<rect x="694" y="396" width="1" height="27" fill="#fff"/>
<rect x="698" y="407" width="1" height="18" fill="#00FF00"/>
<rect x="697" y="417" width="3" height="8" fill="#00FF00"/>
<rect x="698" y="418" width="1" height="6" fill="#000"/>
<rect x="702" y="399" width="1" height="23" fill="#00FF00"/>
<rect x="701" y="400" width="3" height="18" fill="#00FF00"/>
<rect x="702" y="401" width="1" height="16" fill="#000"/>
<rect x="706" y="396" width="1" height="11" fill="#00FF00"/>
<rect x="705" y="399" width="3" height="6" fill="#00FF00"/>
<rect x="706" y="400" width="1" height="4" fill="#000"/>
<rect x="3" y="372" width="1" height="10" fill="#00FF00"/>
</g>
<g shape-rendering="crispEdges" fill="#fff">
<rect x="2" y="2" width="884" height="1"/>
<rect x="2" y="2" width="1" height="545"/>
<rect x="885" y="2" width="1" height="545"/>
<rect x="2" y="546" width="884" height="1"/>
<rect x="886" y="33" width="4" height="1"/>
<rect x="886" y="65" width="4" height="1"/>
<rect x="886" y="97" width="4" height="1"/>
<rect x="886" y="129" width="4" height="1"/>
<rect x="886" y="161" width="4" height="1"/>
<rect x="886" y="193" width="4" height="1"/>
<rect x="886" y="225" width="4" height="1"/>
<rect x="886" y="257" width="4" height="1"/>
<rect x="886" y="289" width="4" height="1"/>
<rect x="886" y="322" width="4" height="1"/>
<rect x="886" y="354" width="4" height="1"/>
<rect x="886" y="386" width="4" height="1"/>
<rect x="886" y="418" width="4" height="1"/>
<rect x="886" y="450" width="4" height="1"/>
<rect x="886" y="482" width="4" height="1"/>
<rect x="886" y="514" width="4" height="1"/>
<rect x="2" y="547" width="1" height="4"/>
<rect x="66" y="547" width="1" height="4"/>
<rect x="130" y="547" width="1" height="4"/>
<rect x="194" y="547" width="1" height="4"/>
<rect x="258" y="547" width="1" height="4"/>
<rect x="322" y="547" width="1" height="4"/>
<rect x="386" y="547" width="1" height="4"/>
<rect x="450" y="547" width="1" height="4"/>
<rect x="514" y="547" width="1" height="4"/>
<rect x="578" y="547" width="1" height="4"/>
<rect x="642" y="547" width="1" height="4"/>
<rect x="706" y="547" width="1" height="4"/>
</g>
<rect x="888" y="395" width="39" height="11" fill="#778899" shape-rendering="crispEdges"/>
<g style="filter:grayscale(1)">
<text x="891.6" y="37" textLength="31" lengthAdjust="spacingAndGlyphs">161.250</text>
<text x="891.6" y="69" textLength="31" lengthAdjust="spacingAndGlyphs">159.665</text>
<text x="891.6" y="101" textLength="31" lengthAdjust="spacingAndGlyphs">158.080</text>
<text x="891.6" y="133" textLength="31" lengthAdjust="spacingAndGlyphs">156.495</text>
<text x="891.6" y="165" textLength="31" lengthAdjust="spacingAndGlyphs">154.910</text>
<text x="891.6" y="197" textLength="31" lengthAdjust="spacingAndGlyphs">153.325</text>
<text x="891.6" y="229" textLength="31" lengthAdjust="spacingAndGlyphs">151.740</text>
<text x="891.6" y="261" textLength="31" lengthAdjust="spacingAndGlyphs">150.155</text>
<text x="891.6" y="293" textLength="31" lengthAdjust="spacingAndGlyphs">148.570</text>
<text x="891.6" y="326" textLength="31" lengthAdjust="spacingAndGlyphs">146.985</text>
<text x="891.6" y="358" textLength="31" lengthAdjust="spacingAndGlyphs">145.400</text>
<text x="891.6" y="390" textLength="31" lengthAdjust="spacingAndGlyphs">143.815</text>
<text x="891.6" y="422" textLength="31" lengthAdjust="spacingAndGlyphs">142.230</text>
<text x="891.6" y="454" textLength="31" lengthAdjust="spacingAndGlyphs">140.645</text>
<text x="891.6" y="486" textLength="31" lengthAdjust="spacingAndGlyphs">139.060</text>
<text x="891.6" y="518" textLength="31" lengthAdjust="spacingAndGlyphs">137.475</text>
<text x="2" y="559" textLength="52.7" lengthAdjust="spacingAndGlyphs">26 Aug 2024</text>
<text x="66" y="559" textLength="50.8" lengthAdjust="spacingAndGlyphs">17 Sep 2024</text>
<text x="130" y="559" textLength="45.5" lengthAdjust="spacingAndGlyphs">9 Oct 2024</text>
<text x="194" y="559" textLength="51.0" lengthAdjust="spacingAndGlyphs">31 Oct 2024</text>
<text x="258" y="559" textLength="53.5" lengthAdjust="spacingAndGlyphs">22 Nov 2024</text>
<text x="322" y="559" textLength="51.0" lengthAdjust="spacingAndGlyphs">16 Dec 2024</text>
<text x="386" y="559" textLength="44.4" lengthAdjust="spacingAndGlyphs">9 Jan 2025</text>
<text x="450" y="559" textLength="49.1" lengthAdjust="spacingAndGlyphs">31 Jan 2025</text>
<text x="514" y="559" textLength="50.9" lengthAdjust="spacingAndGlyphs">24 Feb 2025</text>
<text x="578" y="559" textLength="50.4" lengthAdjust="spacingAndGlyphs">18 Mar 2025</text>
<text x="642" y="559" textLength="44.5" lengthAdjust="spacingAndGlyphs">9 Apr 2025</text>
<text x="706" y="559" textLength="48.1" lengthAdjust="spacingAndGlyphs">1 May 2025</text>
<text x="891.6" y="404" style="fill:#000;stroke:#000" textLength="31" lengthAdjust="spacingAndGlyphs">143.090</text>
<text x="48.8" y="17" textLength="38.2" lengthAdjust="spacingAndGlyphs">USDJPY,</text>
<text x="90.6" y="17" textLength="24.8" lengthAdjust="spacingAndGlyphs">Daily:</text>
<text x="121.4" y="17" textLength="12.6" lengthAdjust="spacingAndGlyphs">US</text>
<text x="138.0" y="17" textLength="25.2" lengthAdjust="spacingAndGlyphs">Dollar</text>
<text x="165.2" y="17" textLength="9.2" lengthAdjust="spacingAndGlyphs">vs</text>
<text x="178.0" y="17" textLength="37.2" lengthAdjust="spacingAndGlyphs">Japanese</text>
<text x="218.8" y="17" textLength="15.5" lengthAdjust="spacingAndGlyphs">Yen</text>
</g>
<polygon points="702,3 712,3 707,8" fill="#778899"/>
<g shape-rendering="crispEdges">
<rect x="7" y="8" width="8" height="11" fill="#D0103A"/><rect x="15" y="8" width="7" height="11" fill="#1F4FA0"/>
<rect x="8" y="9" width="13" height="9" fill="#fff"/>
<rect x="9" y="10" width="5" height="1" fill="#B03030"/><rect x="9" y="13" width="5" height="1" fill="#B03030"/><rect x="9" y="16" width="5" height="1" fill="#B03030"/>
<rect x="15" y="10" width="5" height="1" fill="#3C3B8E"/><rect x="15" y="13" width="5" height="1" fill="#3C3B8E"/><rect x="15" y="16" width="5" height="1" fill="#3C3B8E"/>
<rect x="28" y="8" width="5" height="11" fill="#D0103A"/><rect x="28" y="12" width="7" height="7" fill="#D0103A"/>
<rect x="29" y="9" width="3" height="9" fill="#fff"/><rect x="29" y="13" width="5" height="5" fill="#fff"/>
<rect x="39" y="8" width="4" height="11" fill="#1F4FA0"/><rect x="36" y="12" width="7" height="7" fill="#1F4FA0"/>
<rect x="40" y="9" width="2" height="9" fill="#fff"/><rect x="37" y="13" width="5" height="5" fill="#fff"/>
<rect x="34" y="9" width="4" height="2" fill="#C4CCDC"/>
</g>
</svg></body></html>
